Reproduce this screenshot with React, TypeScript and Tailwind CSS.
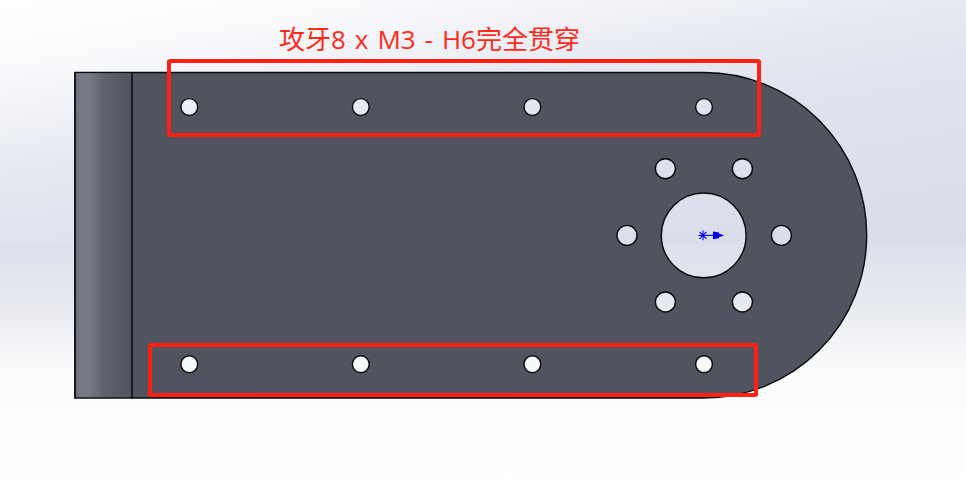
import React from 'react';

const slotHoles = [189.3, 360.8, 532.4, 704];
const ringHoles: [number, number][] = [
  [665.4, 168.7],
  [742.4, 168.7],
  [627, 235.4],
  [781.4, 235.4],
  [665.4, 302],
  [742.4, 302],
];

// circle as a subpath so the holes are real cut-outs in the plate
const circle = (cx: number, cy: number, r: number) =>
  `M${cx - r} ${cy}a${r} ${r} 0 1 0 ${r * 2} 0a${r} ${r} 0 1 0 ${-r * 2} 0Z`;

const platePath = [
  'M75 72.5H704A162.75 162.75 0 0 1 704 398H75Z',
  ...slotHoles.map((x) => circle(x, 107, 8.4)),
  ...slotHoles.map((x) => circle(x, 364.2, 8.4)),
  ...ringHoles.map(([x, y]) => circle(x, y, 10)),
  circle(703.7, 235.4, 42.4),
].join('');

const Part: React.FC = () => {
  return (
    <svg className="absolute left-0 top-0" width="966" height="495" viewBox="0 0 966 495">
      <defs>
        <linearGradient id="hinge" x1="75" x2="132" y1="0" y2="0" gradientUnits="userSpaceOnUse">
          <stop offset="0" stopColor="#686a76" />
          <stop offset="0.08" stopColor="#767886" />
          <stop offset="0.26" stopColor="#777987" />
          <stop offset="0.5" stopColor="#5f616c" />
          <stop offset="1" stopColor="#51535e" />
        </linearGradient>
      </defs>
      <path d={platePath} fill="#51535e" fillRule="evenodd" stroke="#0a0a0e" strokeWidth="1.4" />
      <rect x="75.5" y="73.2" width="56" height="324" fill="url(#hinge)" />
      <path d="M75 72V398.6M132 72V398.6" stroke="#0a0a0e" strokeWidth="1.5" fill="none" />

      {/* origin marker */}
      <g stroke="#0000e6" strokeWidth="1.1" fill="none">
        <path d="M698.5 235.4H723" />
        <path d="M703 230.5V240.3M699.5 231.9L706.5 238.9M706.5 231.9L699.5 238.9" />
      </g>
      <path d="M713 231.5L719 232.5V233.5L724 235.4L719 237.3V238.3L713 239.3Z" fill="#0000e6" />
    </svg>
  );
};

const App: React.FC = () => {
  return (
    <div className="relative flex flex-col w-[966px] h-[495px] overflow-hidden">
      <div className="h-[245px] bg-[linear-gradient(170deg,#ffffff_0%,#fbfbfd_15%,#e6e9f1_42%,#dfe3ee_58%,#d8dce8_100%)]" />
      <div className="h-[250px] bg-[linear-gradient(180deg,#dce0eb_0%,#e7e9f0_22%,#fbfbfc_50%,#ffffff_100%)]" />
      <Part />
      <div
        className="absolute left-[279px] top-[20px] text-[26px] leading-[38px] text-[#ff2a1a] whitespace-nowrap [word-spacing:2.2px]"
        style={{ fontFamily: '"Open Sans", "Noto Sans CJK SC", sans-serif' }}
      >
        攻牙8 x M3 - H6完全贯穿
      </div>
      {/* red callouts */}
      <div className="absolute left-[167px] top-[59px] w-[594px] h-[78px] border-[4px] border-[#ff2013] rounded-[3px]" />
      <div className="absolute left-[148px] top-[343px] w-[610px] h-[54px] border-[4px] border-[#ff2013] rounded-[3px]" />
    </div>
  );
};

export default App;
